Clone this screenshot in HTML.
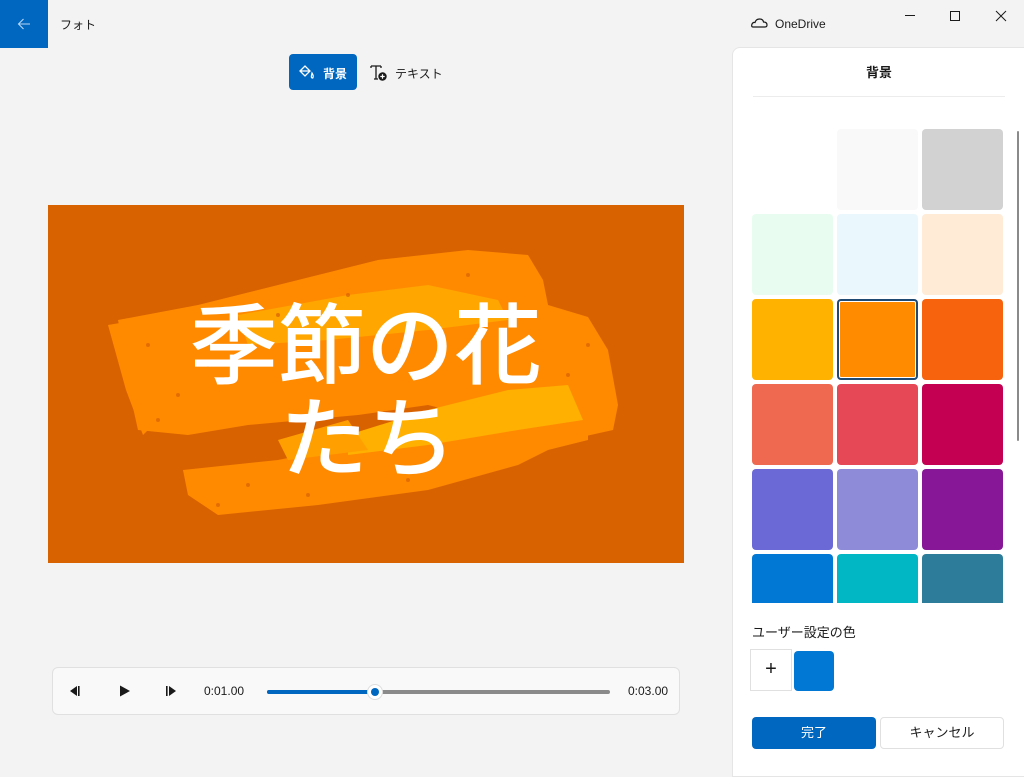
<!DOCTYPE html>
<html><head><meta charset="utf-8">
<style>
*{margin:0;padding:0;box-sizing:border-box}
body{width:1024px;height:769px;background:#f3f3f3;font-family:"Liberation Sans","Noto Sans CJK JP",sans-serif;position:relative;overflow:hidden;color:#1a1a1a}
.abs{position:absolute}
.sw{position:absolute;width:81px;height:81px;border-radius:4px}
</style></head><body>
<div class="abs" style="left:0;top:0;width:48px;height:48px;background:#0067c0"></div>
<svg class="abs" style="left:17px;top:17px" width="14" height="14" viewBox="0 0 14 14"><path d="M13 7 H1.5 M6.5 2 L1.5 7 L6.5 12" fill="none" stroke="#b9d6f2" stroke-width="1.1"/></svg>
<div class="abs" style="left:60px;top:16px;font-size:12px">フォト</div>
<div class="abs" style="left:289px;top:54px;width:68px;height:36px;background:#0067c0;border-radius:4px;color:#fff;font-size:12px;font-weight:bold">
<svg class="abs" style="left:9px;top:10px" width="18" height="16" viewBox="0 0 18 16"><path d="M2 7 L7 2 L12 7 L7 12 Z M2 7 H12" fill="none" stroke="#fff" stroke-width="1.3"/><path d="M14 9 Q16 12 14.8 14 Q13 14 13.4 12 Z" fill="none" stroke="#fff" stroke-width="1.2"/></svg>
<span class="abs" style="left:34px;top:11px">背景</span></div>
<svg class="abs" style="left:370px;top:64px" width="18" height="18" viewBox="0 0 18 18"><path d="M1 2 H11 M6 2 V15 M4 15 H8 M1 2 V4 M11 2 V4" stroke="#1a1a1a" stroke-width="1.3" fill="none"/><circle cx="12.5" cy="12.5" r="4.2" fill="#1a1a1a"/><path d="M12.5 10.3 V14.7 M10.3 12.5 H14.7" stroke="#fff" stroke-width="1.2"/></svg>
<div class="abs" style="left:395px;top:65px;font-size:12px">テキスト</div>

<svg class="abs" style="left:48px;top:205px" width="636" height="358" viewBox="0 0 636 358">
<rect width="636" height="358" fill="#d96200"/>
<polygon points="70,115 150,100 230,80 330,55 420,45 480,50 495,75 500,100 540,112 560,145 570,200 565,225 520,235 440,215 380,200 310,210 200,220 140,230 90,225 80,180 75,140" fill="#ff8a00"/>
<polygon points="135,265 230,255 330,235 420,220 470,190 520,180 540,210 540,235 500,245 470,260 380,285 270,300 170,310 140,290" fill="#ff8a00"/>
<polygon points="60,120 120,110 110,150 125,200 95,230 78,185" fill="#ff8a00"/>
<polygon points="190,110 300,90 380,80 450,95 460,115 380,125 280,135 200,140" fill="#ffa600"/>
<polygon points="300,230 380,205 460,185 520,180 535,215 470,225 380,240 300,250" fill="#ffb000"/>
<polygon points="230,235 300,215 320,245 240,255" fill="#ffa000"/>
<g fill="#d96200" opacity="0.7">
<circle cx="100" cy="140" r="2"/><circle cx="160" cy="160" r="2"/><circle cx="130" cy="190" r="2"/><circle cx="230" cy="110" r="2"/><circle cx="420" cy="70" r="2"/><circle cx="470" cy="140" r="2"/><circle cx="520" cy="170" r="2"/><circle cx="200" cy="280" r="2"/><circle cx="170" cy="300" r="2"/><circle cx="360" cy="275" r="2"/><circle cx="300" cy="90" r="2"/><circle cx="540" cy="140" r="2"/><circle cx="110" cy="215" r="2"/><circle cx="260" cy="290" r="2"/>
</g>
<text x="318" y="172" text-anchor="middle" font-family="Noto Sans CJK JP" font-size="88" font-weight="500" fill="#fff">季節の花</text>
<text x="320" y="265" text-anchor="middle" font-family="Noto Sans CJK JP" font-size="88" font-weight="500" fill="#fff">たち</text>
</svg>

<div class="abs" style="left:52px;top:667px;width:628px;height:48px;background:#f9f9f9;border:1px solid #e0e0e0;border-radius:6px">
<svg class="abs" style="left:14px;top:16px" width="14" height="14" viewBox="0 0 14 14"><path d="M10 2 V12 L3 7 Z" fill="#1a1a1a"/><rect x="11" y="2" width="1.6" height="10" fill="#1a1a1a"/></svg>
<svg class="abs" style="left:65px;top:16px" width="14" height="14" viewBox="0 0 14 14"><path d="M2 1.5 V12.5 L12 7 Z" fill="#1a1a1a"/></svg>
<svg class="abs" style="left:112px;top:16px" width="14" height="14" viewBox="0 0 14 14"><rect x="1" y="2" width="1.6" height="10" fill="#1a1a1a"/><path d="M4 2 V12 L11 7 Z" fill="#1a1a1a"/></svg>
<div class="abs" style="left:151px;top:16px;font-size:12px">0:01.00</div>
<div class="abs" style="left:214px;top:22px;width:343px;height:4px;background:#8a8a8a;border-radius:2px"></div>
<div class="abs" style="left:214px;top:22px;width:108px;height:4px;background:#0067c0;border-radius:2px"></div>
<div class="abs" style="left:314px;top:16px;width:16px;height:16px;border-radius:50%;background:#fff;border:1px solid #ddd"><div style="margin:3px;width:8px;height:8px;border-radius:50%;background:#0067c0"></div></div>
<div class="abs" style="left:575px;top:16px;font-size:12px">0:03.00</div>
</div>

<svg class="abs" style="left:751px;top:17px" width="17" height="12" viewBox="0 0 17 12"><path d="M2 10 Q0 10 1 7 Q2 5 4 5.5 Q5 2 8.5 2 Q12 2 12.5 5 Q16 5 16 8 Q16 10 14 10 Z" fill="#f3f3f3" stroke="#1a1a1a" stroke-width="1.2"/></svg>
<div class="abs" style="left:775px;top:17px;font-size:12px">OneDrive</div>
<div class="abs" style="left:905px;top:15px;width:10px;height:1px;background:#1a1a1a"></div>
<div class="abs" style="left:950px;top:11px;width:10px;height:10px;border:1px solid #1a1a1a"></div>
<svg class="abs" style="left:995px;top:10px" width="12" height="12" viewBox="0 0 12 12"><path d="M1 1 L11 11 M11 1 L1 11" stroke="#1a1a1a" stroke-width="1"/></svg>

<div class="abs" style="left:732px;top:47px;width:300px;height:730px;background:#fff;border-radius:8px 0 0 0;border:1px solid #e5e5e5">
<div class="abs" style="left:0;width:292px;top:14px;text-align:center;font-size:13px;font-weight:bold">背景</div>
<div class="abs" style="left:20px;top:48px;width:252px;height:1px;background:#ececec"></div>
<div class="abs" style="left:284px;top:83px;width:2px;height:310px;background:#8a8a8a;border-radius:1px"></div>
</div>
<div class="abs" style="left:752px;top:129px;width:251px;height:474px;overflow:hidden">
<div class="sw" style="left:85px;top:0;background:#f9f9f9"></div>
<div class="sw" style="left:170px;top:0;background:#d2d2d2"></div>
<div class="sw" style="left:0;top:85px;background:#e8fdf0"></div>
<div class="sw" style="left:85px;top:85px;background:#eaf7fc"></div>
<div class="sw" style="left:170px;top:85px;background:#ffebd6"></div>
<div class="sw" style="left:0;top:170px;background:#ffb300"></div>
<div class="sw" style="left:85px;top:170px;background:#ff8c00;box-shadow:inset 0 0 0 2px #1f4a73,inset 0 0 0 3px #fff"></div>
<div class="sw" style="left:170px;top:170px;background:#f7630c"></div>
<div class="sw" style="left:0;top:255px;background:#ef6950"></div>
<div class="sw" style="left:85px;top:255px;background:#e74856"></div>
<div class="sw" style="left:170px;top:255px;background:#c30052"></div>
<div class="sw" style="left:0;top:340px;background:#6b69d6"></div>
<div class="sw" style="left:85px;top:340px;background:#8e8cd8"></div>
<div class="sw" style="left:170px;top:340px;background:#881798"></div>
<div class="sw" style="left:0;top:425px;background:#0078d4"></div>
<div class="sw" style="left:85px;top:425px;background:#00b7c3"></div>
<div class="sw" style="left:170px;top:425px;background:#2d7d9a"></div>
</div>
<div class="abs" style="left:752px;top:622px;font-size:13px">ユーザー設定の色</div>
<div class="abs" style="left:750px;top:649px;width:42px;height:42px;border:1px solid #e0e0e0;font-size:20px;line-height:38px;text-align:center;font-weight:300">+</div>
<div class="abs" style="left:794px;top:651px;width:40px;height:40px;background:#0078d4;border-radius:4px"></div>
<div class="abs" style="left:752px;top:717px;width:124px;height:32px;background:#0067c0;border-radius:4px;color:#fff;font-size:13px;text-align:center;line-height:32px">完了</div>
<div class="abs" style="left:880px;top:717px;width:124px;height:32px;background:#fff;border:1px solid #e0e0e0;border-radius:4px;font-size:13px;text-align:center;line-height:30px">キャンセル</div>
</body></html>
